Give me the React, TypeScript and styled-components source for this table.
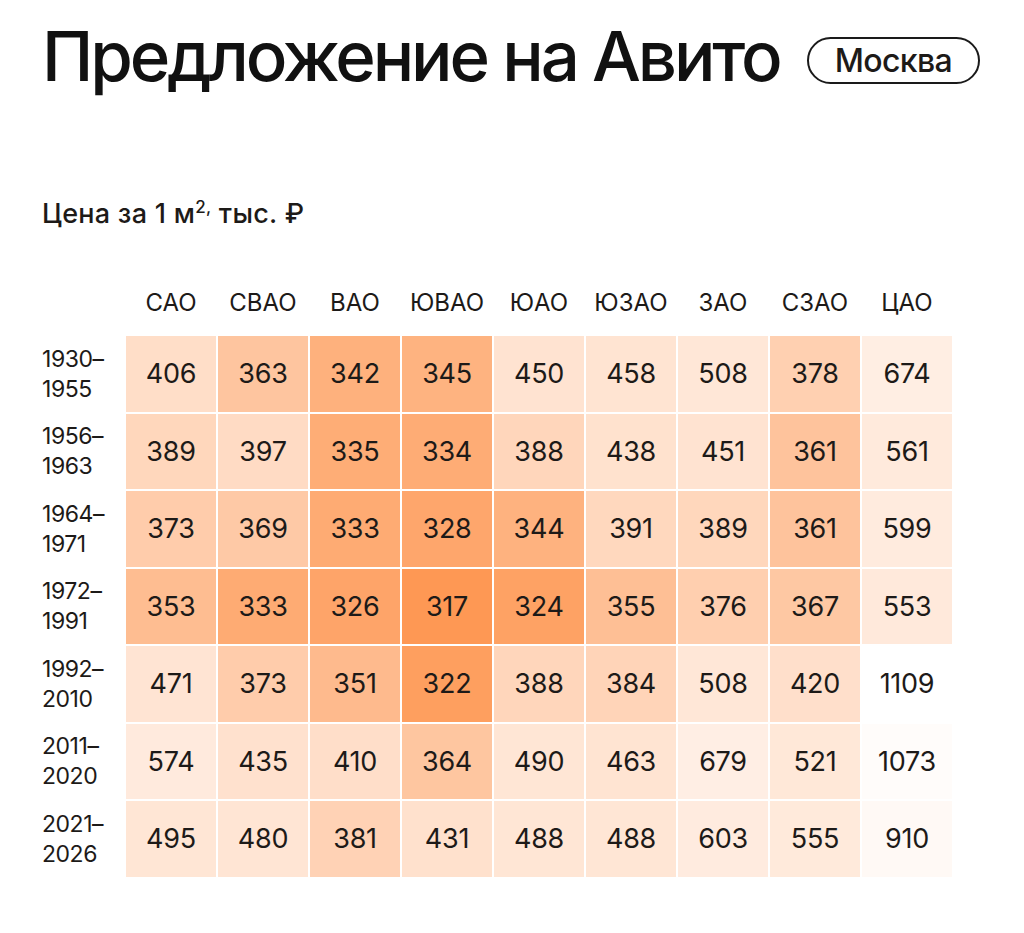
import React from "react";
import styled, { createGlobalStyle } from "styled-components";

const GlobalStyle = createGlobalStyle`
  body {
    margin: 0;
    background: #ffffff;
    font-family: Inter, "Noto Sans", "Liberation Sans", sans-serif;
    color: #1d1a18;
  }
`;

const Page = styled.div`
  width: 1024px;
  min-height: 933px;
  padding: 16px 0 0 42px;
  box-sizing: border-box;
`;

const TitleRow = styled.div`
  display: flex;
  align-items: center;
  gap: 27px;
`;

const Title = styled.h1`
  margin: 0;
  font-size: 69px;
  font-weight: 500;
  letter-spacing: -0.045em;
  line-height: 80px;
  color: #111;
`;

const CityPill = styled.span`
  display: inline-flex;
  align-items: center;
  height: 47px;
  padding: 0 26px;
  box-sizing: border-box;
  border: 2px solid #1a1a1a;
  border-radius: 24px;
  font-size: 32px;
  font-weight: 500;
  letter-spacing: -0.02em;
  margin-top: 8px;
`;

const Subtitle = styled.div`
  margin-top: 103px;
  font-size: 27px;
  font-weight: 500;
  letter-spacing: 0.01em;
  line-height: 30px;

  sup {
    font-size: 17px;
    line-height: 0;
    vertical-align: 10px;
  }
`;

const Heatmap = styled.div`
  margin-top: 59px;
  display: grid;
  grid-template-columns: 82px repeat(9, 90px);
  grid-template-rows: 46px repeat(7, 75.5px);
  gap: 2px;
`;

const ColHead = styled.div`
  display: flex;
  align-items: flex-start;
  justify-content: center;
  font-size: 24px;
  line-height: 30px;
`;

const RowHead = styled.div`
  display: flex;
  flex-direction: column;
  justify-content: center;
  font-size: 23px;
  line-height: 30px;
  letter-spacing: -0.02em;
`;

const Cell = styled.div<{ $tone: string }>`
  display: flex;
  align-items: center;
  justify-content: center;
  background: ${(p) => p.$tone};
  font-size: 27px;
  letter-spacing: -0.01em;
`;

const DISTRICTS = ["САО", "СВАО", "ВАО", "ЮВАО", "ЮАО", "ЮЗАО", "ЗАО", "СЗАО", "ЦАО"];

const ROWS: { from: string; to: string; values: number[] }[] = [
  { from: "1930", to: "1955", values: [406, 363, 342, 345, 450, 458, 508, 378, 674] },
  { from: "1956", to: "1963", values: [389, 397, 335, 334, 388, 438, 451, 361, 561] },
  { from: "1964", to: "1971", values: [373, 369, 333, 328, 344, 391, 389, 361, 599] },
  { from: "1972", to: "1991", values: [353, 333, 326, 317, 324, 355, 376, 367, 553] },
  { from: "1992", to: "2010", values: [471, 373, 351, 322, 388, 384, 508, 420, 1109] },
  { from: "2011", to: "2020", values: [574, 435, 410, 364, 490, 463, 679, 521, 1073] },
  { from: "2021", to: "2026", values: [495, 480, 381, 431, 488, 488, 603, 555, 910] },
];

// price -> colour strength, picked by eye from the chart
const STOPS: [number, number][] = [
  [317, 1],
  [326, 0.88],
  [335, 0.8],
  [345, 0.74],
  [355, 0.62],
  [365, 0.55],
  [380, 0.44],
  [400, 0.33],
  [450, 0.27],
  [550, 0.21],
  [680, 0.16],
  [910, 0.06],
  [1073, 0.03],
  [1109, 0],
];

function tone(value: number) {
  let k = 0;
  for (let i = 0; i < STOPS.length - 1; i++) {
    const [a, ka] = STOPS[i];
    const [b, kb] = STOPS[i + 1];
    if (value >= a && value <= b) {
      k = ka + ((value - a) / (b - a)) * (kb - ka);
      break;
    }
  }
  const mix = (c: number) => Math.round(255 + (c - 255) * k);
  return `rgb(${mix(254)}, ${mix(152)}, ${mix(84)})`;
}

export default function App() {
  return (
    <>
      <GlobalStyle />
      <Page>
        <TitleRow>
          <Title>Предложение на Авито</Title>
          <CityPill>Москва</CityPill>
        </TitleRow>
        <Subtitle>
          Цена за 1 м<sup>2,</sup> тыс. ₽
        </Subtitle>
        <Heatmap>
          <div />
          {DISTRICTS.map((d) => (
            <ColHead key={d}>{d}</ColHead>
          ))}
          {ROWS.map((row) => (
            <React.Fragment key={row.from}>
              <RowHead>
                <span>{row.from}–</span>
                <span>{row.to}</span>
              </RowHead>
              {row.values.map((v, i) => (
                <Cell key={DISTRICTS[i]} $tone={tone(v)}>
                  {v}
                </Cell>
              ))}
            </React.Fragment>
          ))}
        </Heatmap>
      </Page>
    </>
  );
}
